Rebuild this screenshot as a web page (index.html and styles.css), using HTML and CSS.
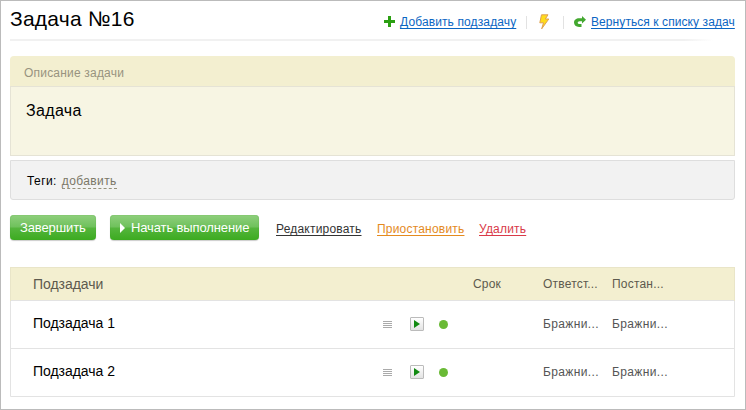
FILE: index.html
```html
<!DOCTYPE html>
<html lang="ru">
<head>
<meta charset="utf-8">
<title>Задача №16</title>
<link rel="stylesheet" href="styles.css">
</head>
<body>
<main class="page">
  <header class="head">
    <h1 class="title">Задача №16</h1>
    <nav class="tools">
      <svg class="plus" width="11" height="11" viewBox="0 0 11 11"><path d="M4 0h3v4h4v3H7v4H4V7H0V4h4z" fill="#2b9f12"/></svg>
      <a class="link add" href="#">Добавить подзадачу</a>
      <i class="sep"></i>
      <svg class="bolt" width="11" height="16" viewBox="0 0 11 16"><path d="M2.500 .8h6.500L6.300 5h3.500L2.700 14.800l1.800-6H.8z" fill="#ffdc1a" stroke="#dfa052" stroke-width="1" stroke-linejoin="round"/></svg>
      <i class="sep"></i>
      <svg class="back" width="12" height="11" viewBox="0 0 12 11"><path d="M8 0 12 3.700 8 7.500V5.200H5.500C4.400 5.200 3.700 6 3.700 6.800c0 .9.800 1.200 2.300 1.200h1.500v3H5C2 11 0 9.300 0 6.600 0 4 2.200 2.200 5 2.200h3z" fill="#43a82f"/></svg>
      <a class="link return" href="#">Вернуться к списку задач</a>
    </nav>
  </header>
  <div class="rule"></div>
  <section class="desc">
    <h2 class="desc-head">Описание задачи</h2>
    <div class="desc-body">Задача</div>
  </section>
  <div class="tags"><span class="tags-label">Теги:</span><a class="tags-add">добавить</a></div>
  <div class="actions">
    <button class="btn finish">Завершить</button>
    <button class="btn start"><svg width="5" height="10" viewBox="0 0 5 10"><path d="M0 0l5 5-5 5z" fill="#fff"/></svg><span>Начать выполнение</span></button>
    <a class="act edit" href="#">Редактировать</a>
    <a class="act pause" href="#">Приостановить</a>
    <a class="act delete" href="#">Удалить</a>
  </div>
  <section class="list">
    <div class="row list-head">
      <span class="name">Подзадачи</span><span></span><span></span><span></span>
      <span class="due">Срок</span><span class="resp">Ответст...</span><span class="auth">Постан...</span>
    </div>
    <div class="row">
      <span class="name">Подзадача 1</span>
      <i class="grip"></i><i class="play"><svg width="6" height="8" viewBox="0 0 6 8"><path d="M0 0l6 4-6 4z" fill="#128a12"/></svg></i><i class="dot"></i>
      <span></span><span class="user">Бражни...</span><span class="user">Бражни...</span>
    </div>
    <div class="row">
      <span class="name">Подзадача 2</span>
      <i class="grip"></i><i class="play"><svg width="6" height="8" viewBox="0 0 6 8"><path d="M0 0l6 4-6 4z" fill="#128a12"/></svg></i><i class="dot"></i>
      <span></span><span class="user">Бражни...</span><span class="user">Бражни...</span>
    </div>
  </section>
</main>
</body>
</html>
```
FILE: styles.css
```css
* { box-sizing: border-box; }
body { margin: 0; background: #fff; font-family: "Liberation Sans", Arial, sans-serif; font-size: 12px; color: #000; }
.page { width: 746px; height: 410px; border: 1px solid #bbb; padding: 0 10px 0 9px; overflow: hidden; }
.head { display: flex; justify-content: space-between; height: 38px; }
.title { margin: 6px 0 0; font-size: 21px; line-height: 24px; font-weight: 400; letter-spacing: .25px; }
.tools { display: flex; align-items: center; height: 42px; white-space: nowrap; }
.plus, .back { flex: none; margin-bottom: 1px; }
.link { color: #0b66c3; line-height: 16px; text-underline-offset: 2px; }
.add { margin-left: 5px; width: 117px; letter-spacing: .12px; }
.return { margin-left: 5px; width: 144px; letter-spacing: .08px; }
.sep { width: 1px; height: 13px; background: #e2e2e2; margin: 0 9px; }
.bolt { margin: 0 4px 1px 3px; }
.bolt + .sep { margin-right: 10px; }
.rule { height: 2px; background: linear-gradient(90deg, #f1f1f1 93%, #fff 97%); }
.desc { margin-top: 15px; }
.desc-head { margin: 0; height: 30px; padding-left: 14px; background: #f3efd0; border-radius: 4px 4px 0 0; color: #98937f; font-size: 12px; line-height: 34px; font-weight: 400; letter-spacing: .2px; }
.desc-body { height: 70px; padding: 14px 15px; background: #f7f5e3; border: 1px solid #e5e3d5; font-size: 16px; line-height: 20px; letter-spacing: .35px; }
.tags { display: flex; gap: 5px; height: 40px; margin-top: 4px; padding: 12px 16px; background: #f2f2f2; border: 1px solid #dedede; border-radius: 0 0 3px 3px; line-height: 16px; letter-spacing: .4px; }
.tags-add { height: 16px; color: #7a7767; border-bottom: 1px dashed #96917b; }
.actions { display: flex; height: 26px; margin-top: 15px; }
.btn { display: flex; align-items: center; height: 25px; padding: 0 10px; border: 0; border-radius: 4px; color: #fff; font: 13px/25px "Liberation Sans", Arial, sans-serif; letter-spacing: -.12px; background: linear-gradient(#8fcf7d 0, #6fc15c 48%, #55b53d 52%, #3cab20 100%); box-shadow: inset 0 0 1px #3f9e2a, 0 1px 1px #ccc; white-space: nowrap; }
.btn svg { flex: none; }
.finish { width: 86px; margin-right: 14px; }
.start { width: 149px; margin-right: 17px; gap: 6px; }
.act { margin-right: 15px; line-height: 28px; text-underline-offset: 2px; white-space: nowrap; letter-spacing: .2px; }
.edit { width: 86px; color: #333; }
.pause { width: 87px; color: #e48a1e; }
.delete { color: #d93a49; }
.list { margin-top: 26px; border: 1px solid #e3e3e3; border-radius: 2px 2px 0 0; }
.row { display: grid; grid-template-columns: 350px 27px 29px 34px 70px 69px 1fr; align-items: center; height: 48px; padding: 0 0 2px 22px; color: #555; }
.row + .row { border-top: 1px solid #e3e3e3; }
.list-head { height: 32px; padding-bottom: 0; background: #f3efd0; box-shadow: 0 0 0 1px #e9e5c8; color: #5d5a4e; letter-spacing: .2px; }
.name { font-size: 14px; line-height: 16px; color: #000; letter-spacing: -.04px; margin-bottom: 1px; }
.user { letter-spacing: .38px; }
.list-head .name { color: #5d5a4e; margin-bottom: 0; }
.grip { width: 9px; height: 7px; margin-top: 1px; background: repeating-linear-gradient(#aaa 0 1px, #fff 1px 2px); }
.play { display: flex; align-items: center; justify-content: center; width: 14px; height: 14px; border: 1px solid #bbb; border-radius: 1px; background: linear-gradient(#fff, #e3e3e3); }
.dot { width: 9px; height: 9px; margin-top: 1px; border-radius: 50%; background: #6aba36; }
```
